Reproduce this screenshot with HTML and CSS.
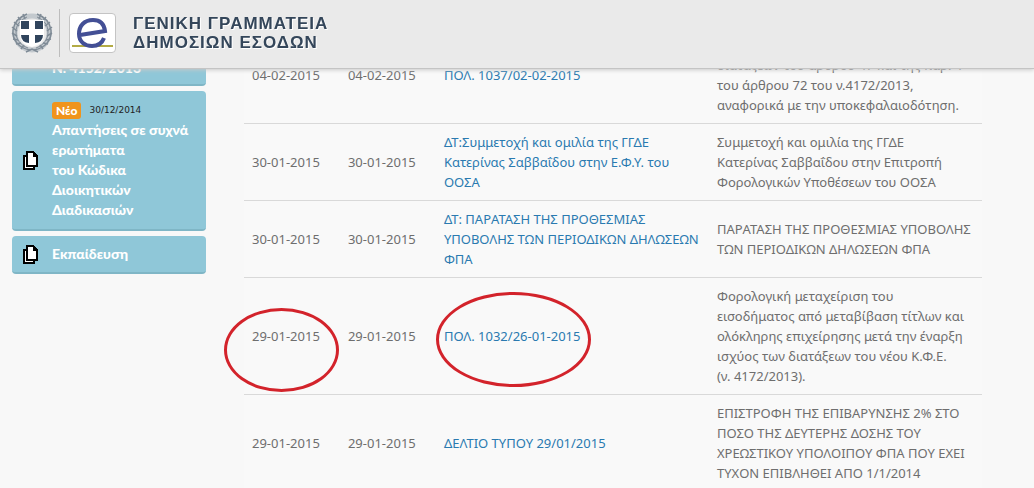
FILE: index.html
```html
<!DOCTYPE html>
<html lang="el">
<head>
<meta charset="utf-8">
<title>Γενική Γραμματεία Δημοσίων Εσόδων</title>
<link rel="stylesheet" href="styles.css">
</head>
<body>
<svg class="defs" aria-hidden="true">
  <symbol id="copy" viewBox="0 0 15 19" shape-rendering="crispEdges">
    <path d="M3 0h8v1h1v1h1v1h1v1h1v12h-3v3h-12v-15h3z" fill="#000"/>
    <path d="M5 2h5v4h3v8h-8z" fill="#fff"/>
    <path d="M2 6h1v10h7v1h-8z" fill="#fff"/>
  </symbol>
</svg>
<header class="header">
  <svg class="emblem" viewBox="0 0 42 42" role="img" aria-label="Εθνόσημο">
    <g fill="none" stroke="#7f8b96">
      <circle cx="21" cy="21" r="17" stroke="#c3c9ce" stroke-width="5"/>
      <path d="M19 38C7 36 1 27 2 18C3 11 8 5 16 2M23 38C35 36 41 27 40 18C39 11 34 5 26 2" stroke-width="1.5"/>
      <path d="M17 36C9 33 5 27 5 20C5 13 9 8 16 5M25 36C33 33 37 27 37 20C37 13 33 8 26 5"/>
      <path d="M1 15l5 4M1 21l5 3M2 27l5 1M5 32l5-1M10 37l3-4M3 10l5 4M7 5l4 5M12 2l2 5M41 15l-5 4M41 21l-5 3M40 27l-5 1M37 32l-5-1M32 37l-3-4M39 10l-5 4M35 5l-4 5M30 2l-2 5M15 40l6-3 6 3" stroke-width="1.5"/>
    </g>
    <path d="M9 8h24v15q0 9-12 12Q9 32 9 23z" fill="#fff"/>
    <path d="M10 9h8v8h-8zM24 9h8v8h-8zM10 23h8v8q-8-1-8-8zM24 23h8q0 7-8 8z" fill="#30445c"/>
  </svg>
  <div class="logo">
    <svg class="logo-mark" viewBox="0 0 41 34" role="img" aria-label="e">
      <path d="M0 30h41" stroke="#b3ab45" stroke-width="2"/>
      <path d="M8 19L33 15C32 7 27 4 21 4C12 4 7 10 7 18C7 26 13 30 20 30Q29 30 32 22" fill="none" stroke="#434f95" stroke-width="4"/>
    </svg>
  </div>
  <h1 class="title">ΓΕΝΙΚΗ ΓΡΑΜΜΑΤΕΙΑ<br>ΔΗΜΟΣΙΩΝ ΕΣΟΔΩΝ</h1>
</header>
<div class="page">
  <nav class="sidebar">
    <a class="card card-first" href="#"><span class="card-text">Ν. 4152/2013</span></a>
    <a class="card card-tall" href="#">
      <svg class="icon"><use href="#copy"/></svg>
      <span class="card-text"><span class="meta"><span class="badge">Νέο</span><span class="date">30/12/2014</span></span>Απαντήσεις σε συχνά ερωτήματα<br>του Κώδικα Διοικητικών Διαδικασιών</span>
    </a>
    <a class="card" href="#"><svg class="icon"><use href="#copy"/></svg><span class="card-text">Εκπαίδευση</span></a>
  </nav>
  <main class="content">
    <table class="table">
      <colgroup><col class="col-date"><col class="col-date"><col><col></colgroup>
      <tbody>
      <tr class="row-first"><td>04-02-2015</td><td>04-02-2015</td><td><a href="#">ΠΟΛ. 1037/02-02-2015</a></td><td class="low">διατάξεων του άρθρου 47 και της παρ. 4<br>του άρθρου 72 του ν.4172/2013,<br>αναφορικά με την υποκεφαλαιοδότηση.</td></tr>
      <tr><td>30-01-2015</td><td>30-01-2015</td><td><a href="#">ΔΤ:Συμμετοχή και ομιλία της ΓΓΔΕ<br>Κατερίνας Σαββαΐδου στην Ε.Φ.Υ. του<br>ΟΟΣΑ</a></td><td>Συμμετοχή και ομιλία της ΓΓΔΕ<br>Κατερίνας Σαββαΐδου στην Επιτροπή<br>Φορολογικών Υποθέσεων του ΟΟΣΑ</td></tr>
      <tr><td>30-01-2015</td><td>30-01-2015</td><td><a href="#">ΔΤ: ΠΑΡΑΤΑΣΗ ΤΗΣ ΠΡΟΘΕΣΜΙΑΣ<br>ΥΠΟΒΟΛΗΣ ΤΩΝ ΠΕΡΙΟΔΙΚΩΝ ΔΗΛΩΣΕΩΝ<br>ΦΠΑ</a></td><td>ΠΑΡΑΤΑΣΗ ΤΗΣ ΠΡΟΘΕΣΜΙΑΣ ΥΠΟΒΟΛΗΣ<br>ΤΩΝ ΠΕΡΙΟΔΙΚΩΝ ΔΗΛΩΣΕΩΝ ΦΠΑ</td></tr>
      <tr><td class="marked">29-01-2015<span class="ring ring-date"></span></td><td>29-01-2015</td><td class="marked"><a href="#">ΠΟΛ. 1032/26-01-2015</a><span class="ring ring-link"></span></td><td>Φορολογική μεταχείριση του<br>εισοδήματος από μεταβίβαση τίτλων και<br>ολόκληρης επιχείρησης μετά την έναρξη<br>ισχύος των διατάξεων του νέου Κ.Φ.Ε.<br>(ν. 4172/2013).</td></tr>
      <tr><td>29-01-2015</td><td>29-01-2015</td><td><a href="#">ΔΕΛΤΙΟ ΤΥΠΟΥ 29/01/2015</a></td><td>ΕΠΙΣΤΡΟΦΗ ΤΗΣ ΕΠΙΒΑΡΥΝΣΗΣ 2% ΣΤΟ<br>ΠΟΣΟ ΤΗΣ ΔΕΥΤΕΡΗΣ ΔΟΣΗΣ ΤΟΥ<br>ΧΡΕΩΣΤΙΚΟΥ ΥΠΟΛΟΙΠΟΥ ΦΠΑ ΠΟΥ ΕΧΕΙ<br>ΤΥΧΟΝ ΕΠΙΒΛΗΘΕΙ ΑΠΟ 1/1/2014</td></tr>
      </tbody>
    </table>
  </main>
</div>
</body>
</html>
```
FILE: styles.css
```css
* { box-sizing: border-box; }
body {
  margin: 0;
  height: 100vh;
  overflow: hidden;
  background: #f8f8f8;
  color: #6e6e6e;
  font: 13px/20px "Noto Sans", sans-serif;
}
a { color: #2a7ab0; text-decoration: none; }
.defs { position: absolute; width: 0; height: 0; }
.header {
  position: fixed;
  top: 0;
  left: 0;
  right: 0;
  z-index: 2;
  display: flex;
  align-items: center;
  height: 69px;
  padding: 0 11px 3px;
  background: #eaeaea;
  border-bottom: 1px solid #c4c4c4;
  box-shadow: 0 1px 4px #c8c8c8;
}
.emblem { width: 42px; height: 42px; }
.logo {
  display: flex;
  align-items: center;
  height: 48px;
  margin-left: 6px;
  padding-left: 9px;
  border-left: 1px solid #bdbdbd;
}
.logo-mark {
  width: 47px;
  height: 40px;
  padding: 2px;
  background: #fff;
  border: 1px solid #c4c4c4;
  border-radius: 4px;
}
.title {
  margin: 0 0 0 17px;
  color: #34465a;
  font: bold 17px/19px "Liberation Sans", Arial, sans-serif;
  letter-spacing: 1px;
  text-shadow: 1px 1px 0 #fff;
}
.page {
  display: grid;
  grid-template-columns: 194px 1fr;
  gap: 38px;
  padding: 27px 52px 0 12px;
}
.sidebar { display: flex; flex-direction: column; gap: 5px; }
.card {
  display: flex;
  align-items: center;
  min-height: 38px;
  padding: 0 11px;
  background: #8fc7d8;
  border-bottom: 2px solid #7fb6c6;
  border-radius: 4px;
  color: #fff;
  font: 900 14px/20px Lato, "Noto Sans", sans-serif;
}
.card-first { align-items: flex-end; height: 59px; padding: 0 11px 6px 40px; }
.card-tall { height: 140px; }
.icon { flex: none; width: 15px; height: 19px; margin-right: 14px; }
.meta { display: flex; align-items: center; gap: 8px; height: 20px; }
.badge {
  padding: 0 4px;
  background: #f0941c;
  border-radius: 3px;
  font-size: 12px;
  line-height: 17px;
}
.date { color: #222; font: 9px/17px "DejaVu Sans", sans-serif; }
.table { width: 100%; table-layout: fixed; border-collapse: separate; border-spacing: 0; background: #f9f9f9; }
.col-date { width: 13%; }
td { padding: 8px; border-bottom: 1px solid #d9d9d9; vertical-align: middle; white-space: nowrap; }
.row-first td { height: 97px; }
.row-first .low { vertical-align: bottom; }
.marked { position: relative; }
.ring { position: absolute; z-index: 1; border: 3px solid #d3232b; border-radius: 50%; pointer-events: none; }
.ring-date { left: -20px; top: 30px; width: 115px; height: 84px; }
.ring-link { left: 0; top: 14px; width: 155px; height: 95px; }
```
